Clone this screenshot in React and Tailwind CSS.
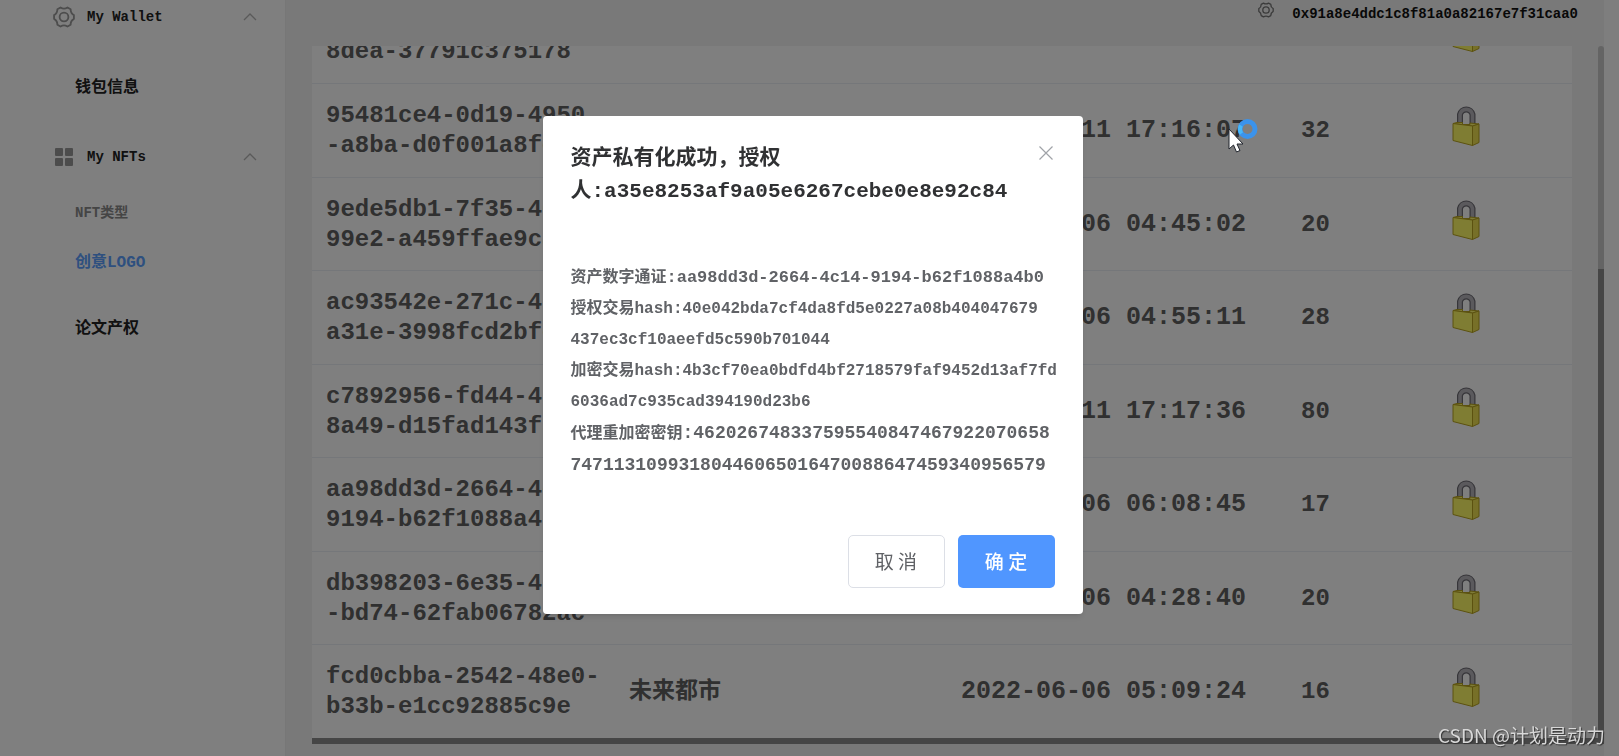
import React from 'react';

const rows = [
    { id: ['', '8dea-37791c375178'], name: '', date: '', count: '' },
    { id: ['95481ce4-0d19-4950', '-a8ba-d0f001a8fe'], name: '', date: '2022-06-11 17:16:07', count: 32 },
    { id: ['9ede5db1-7f35-40', '99e2-a459ffae9ca'], name: '', date: '2022-06-06 04:45:02', count: 20 },
    { id: ['ac93542e-271c-4', 'a31e-3998fcd2bfc'], name: '', date: '2022-06-06 04:55:11', count: 28 },
    { id: ['c7892956-fd44-4', '8a49-d15fad143f5'], name: '', date: '2022-06-11 17:17:36', count: 80 },
    { id: ['aa98dd3d-2664-4c', '9194-b62f1088a4'], name: '', date: '2022-06-06 06:08:45', count: 17 },
    { id: ['db398203-6e35-4', '-bd74-62fab06782ac'], name: '', date: '2022-06-06 04:28:40', count: 20 },
    { id: ['fcd0cbba-2542-48e0-', 'b33b-e1cc92885c9e'], name: '未来都市', date: '2022-06-06 05:09:24', count: 16 },
];

function GearIcon({ className }) {
    return (
        <svg viewBox="0 0 24 24" className={className} fill="none" stroke="currentColor" strokeWidth="2" strokeLinejoin="round">
            <path d="M8.2 1.600 Q12 4 15.800 1.600 L19.200 3.600 Q19.200 8 22.800 10 L22.800 14 Q19.200 16 19.200 20.400 L15.800 22.400 Q12 20 8.200 22.400 L4.800 20.400 Q4.800 16 1.200 14 L1.200 10 Q4.800 8 4.800 3.600 Z" />
            <circle cx="12" cy="12" r="4.800" />
        </svg>
    );
}

function GridIcon() {
    return (
        <svg viewBox="0 0 20 20" className="h-5 w-5" fill="currentColor">
            <rect x="1" y="1" width="8" height="8" rx="1" />
            <rect x="11" y="1" width="8" height="8" rx="1" />
            <rect x="1" y="11" width="8" height="8" rx="1" />
            <rect x="11" y="11" width="8" height="8" rx="1" />
        </svg>
    );
}

function ChevronUp() {
    return (
        <svg viewBox="0 0 14 8" className="h-2 w-[14px] text-[#b4b4b4]" fill="none" stroke="currentColor" strokeWidth="1.3">
            <path d="M1 7 L7 1 L13 7" />
        </svg>
    );
}

function LockIcon() {
    return (
        <svg viewBox="0 0 28 42" className="h-[42px] w-7">
            <path d="M8 20 V9.500 A6.500 7 0 0 1 20.500 9.500 V20" fill="none" stroke="#6e6c74" strokeWidth="6" />
            <path d="M8 20 V9.500 A6.500 7 0 0 1 20.500 9.500 V20" fill="none" stroke="#b6b4ba" strokeWidth="3.600" />
            <path d="M1 18.500 L5 17.500 H10.500 V19.500 H18 V18 L27 19 L20.500 21 Z" fill="#fff870" stroke="#b8a420" strokeWidth="1" strokeLinejoin="round" />
            <path d="M1 18.500 L20.500 21 V40.500 L1 35.500 Z" fill="#fffa66" stroke="#b8a420" strokeWidth="1" strokeLinejoin="round" />
            <path d="M20.500 21 L27 19 V37.500 L20.500 40.500 Z" fill="#eee050" stroke="#b8a420" strokeWidth="1" strokeLinejoin="round" />
        </svg>
    );
}

function Sidebar() {
    return (
        <nav className="w-[286px] shrink-0 border-r border-[#eeeeee] bg-white pl-[53px] pt-px text-base font-bold text-[#222222]">
            <button className="flex h-8 w-full items-center pr-7 text-left text-sm">
                <GearIcon className="h-[22px] w-[22px] text-[#9a9a9a]" />
                <span className="ml-3 flex-1">My Wallet</span>
                <ChevronUp />
            </button>
            <a href="#wallet" className="mt-[43px] block pl-[22px] leading-6">钱包信息</a>
            <button className="mt-[41px] flex h-8 w-full items-center pr-7 text-left text-sm">
                <span className="flex w-[22px] justify-center text-[#999999]"><GridIcon /></span>
                <span className="ml-3 flex-1">My NFTs</span>
                <ChevronUp />
            </button>
            <a href="#types" className="mt-7 block pl-[22px] text-sm leading-6 text-[#8a8a8a]">NFT类型</a>
            <a href="#logo" className="mt-[26px] block pl-[22px] leading-6 text-[#5ca0ff]">创意LOGO</a>
            <a href="#paper" className="mt-[42px] block pl-[22px] leading-6">论文产权</a>
        </nav>
    );
}

function AssetTable() {
    return (
        <table className="w-full shrink-0 table-fixed text-left text-2xl font-bold leading-[30px] text-[#606060]">
            <colgroup>
                <col className="w-[303px]" />
                <col className="w-[330px]" />
                <col className="w-[342px]" />
                <col className="w-[150px]" />
                <col />
            </colgroup>
            <tbody>
                {rows.map((row, i) => (
                    <tr key={i} className="border-b border-[#ebeef5] odd:h-[93px] even:h-[94px] last:border-b-0">
                        <td className="whitespace-nowrap pl-[14px] pt-[2px]">
                            <div className="min-h-[30px]">{row.id[0]}</div>
                            <div>{row.id[1]}</div>
                        </td>
                        <td className="pl-[14px] pt-[2px] text-[23px]">{row.name}</td>
                        <td className="whitespace-nowrap pl-4 pt-[2px] text-[25px]">{row.date}</td>
                        <td className="pl-[14px] pt-[2px]">{row.count}</td>
                        <td className="pb-2 pl-[15px]"><LockIcon /></td>
                    </tr>
                ))}
            </tbody>
        </table>
    );
}

function ConfirmDialog() {
    return (
        <div className="fixed inset-0 flex items-start justify-center bg-black/50 pl-[6px] pt-[116px]">
            <div role="dialog" aria-labelledby="dialog-title" className="w-[540px] rounded-sm bg-white px-7 pb-[26px] pt-[26px] shadow-md">
                <div className="flex items-start justify-between">
                    <h2 id="dialog-title" className="whitespace-nowrap text-[21px] font-bold leading-[33px] text-[#303133]">
                        资产私有化成功，授权<br />人:a35e8253af9a05e6267cebe0e8e92c84
                    </h2>
                    <button aria-label="Close" className="mr-[2px] mt-1 text-[#a0a3a8]">
                        <svg viewBox="0 0 14 14" className="h-[14px] w-[14px]" fill="none" stroke="currentColor" strokeWidth="1.2">
                            <path d="M0.500 0.500 L13.500 13.500 M13.500 0.500 L0.500 13.500" />
                        </svg>
                    </button>
                </div>
                <div className="mt-[54px] whitespace-nowrap text-base font-bold leading-[31px] text-[#606266]">
                    <p>资产数字通证<span className="text-[17px]">:aa98dd3d-2664-4c14-9194-b62f1088a4b0</span></p>
                    <p>授权交易hash:40e042bda7cf4da8fd5e0227a08b404047679</p>
                    <p>437ec3cf10aeefd5c590b701044</p>
                    <p>加密交易hash:4b3cf70ea0bdfd4bf2718579faf9452d13af7fd</p>
                    <p>6036ad7c935cad394190d23b6</p>
                    <p>代理重加密密钥<span className="text-lg leading-[31px]">:462026748337595540847467922070658</span></p>
                    <p className="text-lg leading-[31px]">74711310993180446065016470088647459340956579</p>
                </div>
                <div className="mt-[54px] flex justify-end gap-[13px] font-['Noto_Sans_CJK_SC',sans-serif] text-[19px]">
                    <button className="h-[53px] w-[97px] rounded-[5px] border border-[#dcdfe6] text-[#606266]">取 消</button>
                    <button className="h-[53px] w-[97px] rounded-[5px] bg-[#5096ff] font-medium text-white">确 定</button>
                </div>
            </div>
        </div>
    );
}

function BusyCursor() {
    return (
        <svg viewBox="0 0 32 34" className="absolute left-[1228px] top-[119px] h-[34px] w-8">
            <circle cx="19.500" cy="10" r="7.500" fill="none" stroke="#3b93ec" strokeWidth="5" />
            <path d="M13 6.500 A7.500 7.500 0 0 0 13.500 14.500" fill="none" stroke="#45b8fb" strokeWidth="4" />
            <path d="M1 10 V30 L5.500 26 L8.500 33 L12 31.500 L9 25 H15 Z" fill="#ffffff" stroke="#20242c" strokeWidth="1" />
        </svg>
    );
}

function App() {
    return (
        <div className="relative flex h-screen overflow-hidden bg-[#f3f3f3] font-['Liberation_Mono','Noto_Sans_CJK_SC',monospace]">
            <Sidebar />
            <main className="flex min-w-0 flex-1 flex-col pb-3 pl-[26px]">
                <header className="flex h-[46px] shrink-0 items-start justify-end gap-[18px] pr-[26px] pt-[2px]">
                    <GearIcon className="h-4 w-4 text-[#777777]" />
                    <span className="text-sm font-bold leading-6 text-[#111111]">0x91a8e4ddc1c8f81a0a82167e7f31caa0</span>
                </header>
                <div className="flex min-h-0 flex-1">
                    <div className="flex min-w-0 flex-1 flex-col">
                        <div className="mr-[26px] flex min-h-0 flex-1 flex-col justify-end overflow-hidden bg-white">
                            <AssetTable />
                        </div>
                        <div className="h-[6px] shrink-0 bg-[#8c8c8c]" />
                    </div>
                    <div className="flex w-[6px] flex-col rounded-t bg-[#c8c8c8]">
                        <div className="mt-[223px] flex-1 bg-[#8c8c8c]" />
                    </div>
                </div>
            </main>
            <div className="w-[15px] shrink-0 bg-[#fcfcfc]" />
            <ConfirmDialog />
            <BusyCursor />
            <div className="absolute bottom-[6px] right-[14px] font-['Noto_Sans_CJK_SC',sans-serif] text-[19px] leading-[30px] text-[#d8d8d8] [text-shadow:1px_1px_1px_#333333]">
                CSDN @计划是动力
            </div>
        </div>
    );
}

export default App;
